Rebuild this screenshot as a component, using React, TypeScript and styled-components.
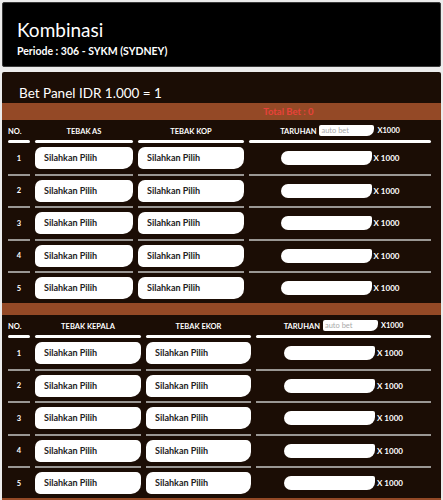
import React from 'react'
import styled, { createGlobalStyle } from 'styled-components'

const GlobalStyle = createGlobalStyle`
  body {
    margin: 0;
    background: #ececec;
    font-family: Lato, "Open Sans", Arial, sans-serif;
  }
`

const Page = styled.div`
  width: 443px;
  height: 500px;
  overflow: hidden;
  padding: 2px;
  box-sizing: border-box;
  display: flex;
  flex-direction: column;
  gap: 5px;
`

const HeaderCard = styled.div`
  background: #000;
  border: 1px solid #3a3a3a;
  border-radius: 2px;
  padding: 14px 14px 7px;
  color: #fff;
  display: flex;
  flex-direction: column;
`

const Title = styled.h1`
  margin: 0;
  font-size: 19px;
  font-weight: 400;
  line-height: 26px;
`

const Periode = styled.div`
  font-size: 10.5px;
  font-weight: 700;
  line-height: 16px;
`

const Panel = styled.div`
  flex: 1;
  background: #1b0d05;
  border-radius: 2px 2px 0 0;
  display: flex;
  flex-direction: column;
`

const PanelTitle = styled.div`
  color: #fff;
  font-size: 13.5px;
  line-height: 20px;
  padding: 11px 17px 0;
  height: 31px;
  box-sizing: border-box;
`

const OrangeBar = styled.div<{ $h: number }>`
  background: #944926;
  height: ${({ $h }) => $h}px;
  flex-shrink: 0;
  display: flex;
  align-items: center;
  justify-content: center;
`

const TotalBet = styled.span`
  color: #e8423a;
  font-size: 9.5px;
  font-weight: 700;
  padding-left: 134px;
`

const Grid = styled.div<{ $cols: string }>`
  display: grid;
  grid-template-columns: ${({ $cols }) => $cols};
  column-gap: 5px;
  padding: 0 10px 0 6px;
`

const HeadCell = styled.div<{ $left?: boolean }>`
  position: relative;
  color: #fff;
  font-size: 7.5px;
  font-weight: 700;
  height: 23px;
  padding-top: 7px;
  box-sizing: border-box;
  display: flex;
  align-items: flex-start;
  justify-content: ${({ $left }) => ($left ? 'flex-start' : 'center')};
  gap: 3px;
  &::after {
    content: '';
    position: absolute;
    left: 0;
    right: 0;
    bottom: 0;
    height: 3px;
    border-radius: 2px;
    background: #fff;
  }
`

const HeadInputWrap = styled.div`
  display: flex;
  align-items: center;
  gap: 3px;
  margin-top: -2px;
`

const AutoBet = styled.div`
  width: 55px;
  height: 11px;
  background: #fff;
  border-radius: 2px 2px 7px 2px;
  color: #aaa;
  font-size: 7.5px;
  font-weight: 400;
  line-height: 11px;
  padding-left: 2px;
  box-sizing: border-box;
`

const Row = styled.div`
  display: contents;
`

const Cell = styled.div<{ $last?: boolean }>`
  height: ${({ $last }) => ($last ? 30 : 32.5)}px;
  padding: 4px 0 4px;
  box-sizing: border-box;
  border-bottom: ${({ $last }) => ($last ? 'none' : '2px solid #9a9794')};
  display: flex;
  align-items: center;
  justify-content: center;
  color: #fff;
  font-size: 7.5px;
  font-weight: 700;
`

const Select = styled.div`
  width: 100%;
  height: 22px;
  background: #fff;
  border-radius: 7px 5px 10px 5px;
  color: #222;
  font-size: 9px;
  line-height: 22px;
  padding-left: 9px;
  box-sizing: border-box;
`

const BetInput = styled.div`
  width: 91px;
  height: 14px;
  background: #fff;
  border-radius: 7px 2px 8px 7px;
`

const Times = styled.span`
  font-size: 8px;
  font-weight: 700;
  margin-left: 2px;
`

const sections = [
  { cols: '22px 98px 106px 1fr', a: 'TEBAK AS', b: 'TEBAK KOP' },
  { cols: '22px 106px 105px 1fr', a: 'TEBAK KEPALA', b: 'TEBAK EKOR' },
]

const rows = [1, 2, 3, 4, 5]

const BetSection = ({ cols, a, b }: { cols: string; a: string; b: string }) => (
  <Grid $cols={cols}>
    <HeadCell $left>NO.</HeadCell>
    <HeadCell>{a}</HeadCell>
    <HeadCell>{b}</HeadCell>
    <HeadCell>
      <span>TARUHAN</span>
      <HeadInputWrap>
        <AutoBet>auto bet</AutoBet>
        <span>X1000</span>
      </HeadInputWrap>
    </HeadCell>
    {rows.map((n) => {
      const last = n === rows.length
      return (
        <Row key={n}>
          <Cell $last={last}>{n}</Cell>
          <Cell $last={last}>
            <Select>Silahkan Pilih</Select>
          </Cell>
          <Cell $last={last}>
            <Select>Silahkan Pilih</Select>
          </Cell>
          <Cell $last={last}>
            <BetInput />
            <Times>X 1000</Times>
          </Cell>
        </Row>
      )
    })}
  </Grid>
)

export default function App() {
  return (
    <>
      <GlobalStyle />
      <Page>
        <HeaderCard>
          <Title>Kombinasi</Title>
          <Periode>Periode : 306 - SYKM (SYDNEY)</Periode>
        </HeaderCard>
        <Panel>
          <PanelTitle>Bet Panel IDR 1.000 = 1</PanelTitle>
          <OrangeBar $h={17}>
            <TotalBet>Total Bet : 0</TotalBet>
          </OrangeBar>
          <BetSection {...sections[0]} />
          <OrangeBar $h={12} />
          <BetSection {...sections[1]} />
          <OrangeBar $h={6} />
        </Panel>
      </Page>
    </>
  )
}
